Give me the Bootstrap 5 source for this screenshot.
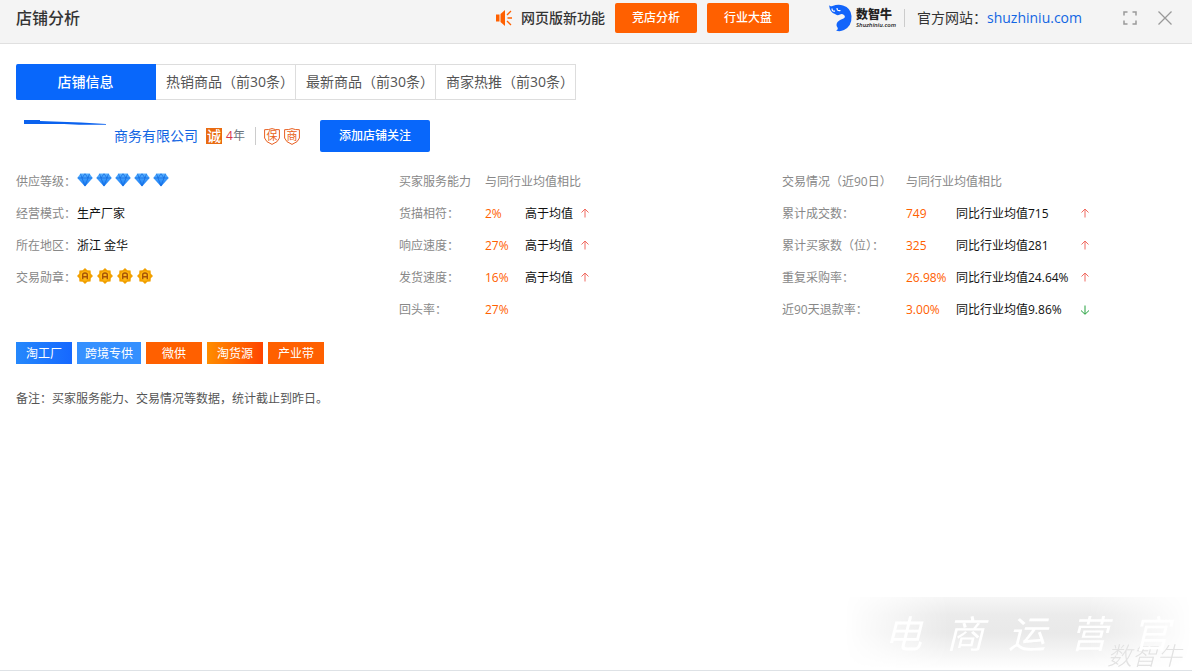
<!DOCTYPE html>
<html lang="zh-CN">
<head>
<meta charset="utf-8">
<meta name="viewport" content="width=device-width, initial-scale=1">
<title>店铺分析</title>
<link href="https://cdn.jsdelivr.net/npm/bootstrap@5.3.0/dist/css/bootstrap.min.css" rel="stylesheet">
<style>
:root{--blue:#0867fb;--orange:#ff6000}
body{font-family:"Open Sans","Noto Sans CJK SC",sans-serif;font-size:12px;line-height:32px;color:#111}
.topbar{padding:3px 20px 10px 16px;background:#f4f4f4;border-bottom:1px solid #e0e0e0;line-height:30px}
.topbar h1{font-size:16px;line-height:30px;color:#333}
.topbar-side{font-size:14px;color:#333;white-space:nowrap}
.act{--bs-btn-font-size:12px;--bs-btn-line-height:30px;--bs-btn-padding-x:0;--bs-btn-padding-y:0;--bs-btn-border-width:0;--bs-btn-border-radius:2px;--bs-btn-color:#fff;--bs-btn-bg:var(--orange);--bs-btn-hover-bg:#e65600;--bs-btn-hover-color:#fff;width:82px;font-weight:500;margin-left:10px}
.act-follow{--bs-btn-bg:var(--blue);--bs-btn-hover-bg:#0558dd;--bs-btn-line-height:32px;width:110px;margin-left:20px}
.site-link,.shop-name{color:#1266e3;text-decoration:none}
.brand{margin-left:39px}
.brand-name{font-size:12px;font-weight:900;line-height:14px;color:#222}
.brand-host{font-size:6px;font-weight:600;font-style:italic;line-height:6px;color:#222}
.rule{width:1px;height:18px;background:#ccc}
.tool{border:0;background:none;padding:0;margin-left:21px;line-height:0;color:#999}
.tool-full{margin-left:41px}
.tabs{margin:20px 16px 0}
.tabs .nav-link{width:140px;height:36px;padding:0 0 0 10px;background:#fff;border:1px solid #ddd;border-left-width:0;border-radius:0;font-size:14px;line-height:34px;color:#555;text-align:left;white-space:nowrap}
.tabs .nav-link.active{background:var(--blue);border-color:var(--blue);color:#fff;font-weight:500;text-align:center;padding:0;border-radius:2px 0 0 2px}
.shop{height:32px;margin:20px 16px 0}
.mask{margin-left:8px}
.shop-name{font-size:14px;margin-left:8px;white-space:nowrap}
.cheng{width:16px;height:16px;line-height:16px;font-size:14px;font-weight:500;text-align:center;color:#fff;background:#e96b10;margin:0 4px 0 8px}
.shop .rule{margin:0 8px 0 10px}
.guard{width:16px;height:17px;line-height:16px;font-size:11px;text-align:center;color:#e85f21}
.stats{margin:14px 27px 0 16px}
.muted{color:#888}
.orange{color:var(--orange)}
.line{display:flex;height:32px;white-space:nowrap}
.supply .lab{width:61px}
.service .lab{width:86px}.service .num{width:40px}.service .cmp{width:55px}
.trade .lab{width:124px}.trade .num{width:50px}.trade .cmp{width:124px}
.arrow{width:10px;height:32px;padding:10px 0 12px;stroke:#f06a60;fill:none}
.arrow.down{stroke:#22a03c;padding:11px 0}
.tags{gap:5px;margin:16px 16px 0}
.tag{min-width:56px;padding:1px 8px 0;line-height:21px;color:#fff;text-align:center;background:var(--orange)}
.tag-factory{background:linear-gradient(90deg,#2588fc,#1668ff)}
.tag-cross{background:#3590ff}
.tag-source{background:linear-gradient(90deg,#ff8d00,#ff4400)}
.note{margin:19px 16px 0;color:#555}
.stamp{position:fixed;right:0;bottom:2px;width:348px;height:72px}
.stamp-haze{position:absolute;inset:0;background:linear-gradient(#f6f6f6,#ebebeb 25%,#e9e9e9 50%,#fff);-webkit-mask-image:linear-gradient(90deg,#0000,#000 30%,#000 70%,#0000);mask-image:linear-gradient(90deg,#0000,#000 30%,#000 70%,#0000)}
.stamp-text{position:relative;padding-left:40px;gap:24px;display:flex;font-size:38px;font-style:italic;line-height:72px;color:#fff}
.stamp-sub{position:absolute;right:10px;bottom:0;font-size:25px;line-height:28px;font-weight:300;font-style:italic;color:#e2e2e2}
</style>
</head>
<body class="min-vh-100 bg-white border-bottom">
<svg width="0" height="0" class="position-absolute" aria-hidden="true">
<defs>
<linearGradient id="gemfill" x2="0" y2="1"><stop stop-color="#59b2ff"/><stop offset="1" stop-color="#1479f5"/></linearGradient>
<symbol id="gem" viewBox="0 0 16 14"><path d="M3.500.5h9L15.700 5 8 13.500.3 5z" fill="url(#gemfill)"/><path d="M.8 5h14.400M3.500.8 5 5l3 8 3-8 1.500-4.200M5 5l3-4.300L11 5" fill="none" stroke="#1269dd" stroke-width=".7"/></symbol>
<symbol id="medal" viewBox="0 0 16 16"><path d="M8 0l2.300 2.200 3.300.2.200 3.300L16 8l-2.200 2.300-.2 3.300-3.300.2L8 16l-2.300-2.200-3.300-.2-.2-3.300L0 8l2.200-2.300.2-3.300 3.300-.2z" fill="#f2a000"/><circle cx="8" cy="8" r="4.800" fill="#ffb914"/><path d="M5.700 11.200V6.800Q5.700 5 8 5t2.300 1.800v4.400M5.700 8.700h4.600" fill="none" stroke="#a65308" stroke-width="1.400"/></symbol>
<symbol id="up" viewBox="0 0 10 10"><path d="M5 9.500V1M1.500 4.500 5 1l3.500 3.500"/></symbol>
<symbol id="down" viewBox="0 0 10 10"><path d="M5 .5V9M1 5.500 5 9.300l4-3.800"/></symbol>
<symbol id="shield" viewBox="0 0 16 17"><path d="M8 .6Q11 1.900 15.400 1.700V10Q14.500 14 8 16.400 1.500 14 .6 10V1.700Q5 1.900 8 .6z" fill="#fff" stroke="#e85f21"/></symbol>
</defs>
</svg>

<header class="topbar d-flex justify-content-between">
  <h1 class="m-0 fw-medium">店铺分析</h1>
  <div class="topbar-side d-flex align-items-center">
    <svg class="me-2" width="18" height="18" viewBox="0 0 18 18"><path d="M1 5.500h3.500v7H1zM5.500 5 10 1v16l-4.500-4z" fill="#ff6000"/><path d="M12 6l4-4M12.500 9H17M12 12l4 4" stroke="#ff6000" stroke-width="1.300"/></svg>
    <span class="fw-medium">网页版新功能</span>
    <button class="btn act">竞店分析</button>
    <button class="btn act">行业大盘</button>
    <div class="brand d-flex align-items-center">
      <svg class="me-1" width="24" height="28" viewBox="0 0 24 28"><path d="M1 1Q2 3 4.500 2 10 0 15 1.500 23 4 23.500 12 24 22 16 26 12 28 8 26.500 10.500 25.500 9.500 23.500 7.500 21 9.500 18 11.500 15.500 15.500 14.500 18 13 16 11 14 9.500 12 10.500 9 12 7 10 2 9 1 1z" fill="#1264fb"/><path d="M4 4.500Q4 8 7 7M9 4Q9 7.500 12.500 6.500" fill="none" stroke="#fff" stroke-width="1.200"/></svg>
      <div class="d-flex flex-column"><span class="brand-name">数智牛</span><span class="brand-host">Shuzhiniu.com</span></div>
    </div>
    <span class="rule mx-2"></span>
    <span class="ms-1">官方网站：</span><a class="site-link" href="#">shuzhiniu.com</a>
    <button class="tool tool-full" aria-label="全屏"><svg width="14" height="14" viewBox="0 0 14 14" fill="none" stroke="currentColor" stroke-width="1.500"><path d="M1 4.500V1h3.500M9.500 1H13v3.500M13 9.500V13H9.500M4.500 13H1V9.500"/></svg></button>
    <button class="tool" aria-label="关闭"><svg width="14" height="14" viewBox="0 0 14 14" fill="none" stroke="currentColor" stroke-width="1.300"><path d="M.5.5l13 13M13.500.5l-13 13"/></svg></button>
  </div>
</header>

<main>
  <div class="tabs nav" role="tablist">
    <button class="nav-link active" role="tab" aria-selected="true">店铺信息</button>
    <button class="nav-link" role="tab">热销商品（前30条）</button>
    <button class="nav-link" role="tab">最新商品（前30条）</button>
    <button class="nav-link" role="tab">商家热推（前30条）</button>
  </div>

  <div class="shop d-flex align-items-center">
    <svg class="mask align-self-start" width="82" height="5" viewBox="0 0 82 5"><path d="M0 0h16v1l41 1.500 25 1.500v.8H55L40 4H0z" fill="#0b62ee"/></svg>
    <a class="shop-name" href="#">商务有限公司</a>
    <span class="cheng">诚</span>
    <span><span class="text-danger">4</span><span class="text-secondary">年</span></span>
    <span class="rule"></span>
    <span class="guard position-relative me-1"><svg class="position-absolute top-0 start-0" width="16" height="17"><use href="#shield"/></svg><span class="position-relative">保</span></span>
    <span class="guard position-relative"><svg class="position-absolute top-0 start-0" width="16" height="17"><use href="#shield"/></svg><span class="position-relative">商</span></span>
    <button class="btn act act-follow">添加店铺关注</button>
  </div>

  <section class="stats row row-cols-3 g-0">
    <div class="supply">
      <div class="line"><span class="lab muted">供应等级：</span>
        <span class="d-flex align-items-center pb-1" style="gap:3px"><svg width="16" height="14"><use href="#gem"/></svg><svg width="16" height="14"><use href="#gem"/></svg><svg width="16" height="14"><use href="#gem"/></svg><svg width="16" height="14"><use href="#gem"/></svg><svg width="16" height="14"><use href="#gem"/></svg></span></div>
      <div class="line"><span class="lab muted">经营模式：</span><span>生产厂家</span></div>
      <div class="line"><span class="lab muted">所在地区：</span><span>浙江 金华</span></div>
      <div class="line"><span class="lab muted">交易勋章：</span>
        <span class="d-flex align-items-center gap-1 pb-1"><svg width="16" height="16"><use href="#medal"/></svg><svg width="16" height="16"><use href="#medal"/></svg><svg width="16" height="16"><use href="#medal"/></svg><svg width="16" height="16"><use href="#medal"/></svg></span></div>
    </div>
    <div class="service">
      <div class="line muted"><span class="lab">买家服务能力</span><span>与同行业均值相比</span></div>
      <div class="line"><span class="lab muted">货描相符：</span><span class="num orange">2%</span><span class="cmp">高于均值</span><svg class="arrow"><use href="#up"/></svg></div>
      <div class="line"><span class="lab muted">响应速度：</span><span class="num orange">27%</span><span class="cmp">高于均值</span><svg class="arrow"><use href="#up"/></svg></div>
      <div class="line"><span class="lab muted">发货速度：</span><span class="num orange">16%</span><span class="cmp">高于均值</span><svg class="arrow"><use href="#up"/></svg></div>
      <div class="line"><span class="lab muted">回头率：</span><span class="num orange">27%</span></div>
    </div>
    <div class="trade">
      <div class="line muted"><span class="lab">交易情况（近90日）</span><span>与同行业均值相比</span></div>
      <div class="line"><span class="lab muted">累计成交数：</span><span class="num orange">749</span><span class="cmp">同比行业均值715</span><svg class="arrow"><use href="#up"/></svg></div>
      <div class="line"><span class="lab muted">累计买家数（位）：</span><span class="num orange">325</span><span class="cmp">同比行业均值281</span><svg class="arrow"><use href="#up"/></svg></div>
      <div class="line"><span class="lab muted">重复采购率：</span><span class="num orange">26.98%</span><span class="cmp">同比行业均值24.64%</span><svg class="arrow"><use href="#up"/></svg></div>
      <div class="line"><span class="lab muted">近90天退款率：</span><span class="num orange">3.00%</span><span class="cmp">同比行业均值9.86%</span><svg class="arrow down"><use href="#down"/></svg></div>
    </div>
  </section>

  <div class="tags d-flex">
    <span class="tag tag-factory">淘工厂</span><span class="tag tag-cross">跨境专供</span><span class="tag">微供</span><span class="tag tag-source">淘货源</span><span class="tag">产业带</span>
  </div>
  <p class="note mb-0">备注：买家服务能力、交易情况等数据，统计截止到昨日。</p>
</main>

<div class="stamp pe-none">
  <div class="stamp-haze"></div>
  <span class="stamp-sub">数智牛</span>
  <div class="stamp-text"><span>电</span><span>商</span><span>运</span><span>营</span><span>官</span></div>
</div>
<script src="https://cdn.jsdelivr.net/npm/bootstrap@5.3.0/dist/js/bootstrap.bundle.min.js"></script>
</body>
</html>
